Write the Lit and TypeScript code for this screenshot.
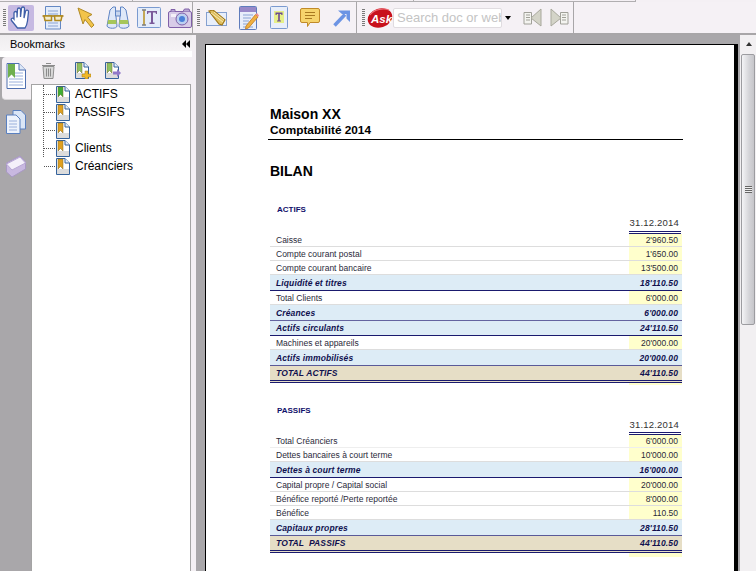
import { LitElement, html, css, svg } from "lit";
import { customElement } from "lit/decorators.js";

type Row = { label: string; value: string; kind: "plain" | "sub" | "total"; h: number; line?: string };

const ACTIFS: Row[] = [
  { label: "Caisse", value: "2'960.50", kind: "plain", h: 13 },
  { label: "Compte courant postal", value: "1'650.00", kind: "plain", h: 14 },
  { label: "Compte courant bancaire", value: "13'500.00", kind: "plain", h: 14 },
  { label: "Liquidité et titres", value: "18'110.50", kind: "sub", h: 16, line: "#1a1a6e" },
  { label: "Total Clients", value: "6'000.00", kind: "plain", h: 14 },
  { label: "Créances", value: "6'000.00", kind: "sub", h: 16, line: "#6464a0" },
  { label: "Actifs circulants", value: "24'110.50", kind: "sub", h: 15, line: "#1a1a6e" },
  { label: "Machines et appareils", value: "20'000.00", kind: "plain", h: 14 },
  { label: "Actifs immobilisés", value: "20'000.00", kind: "sub", h: 16, line: "#5a5a98" },
  { label: "TOTAL ACTIFS", value: "44'110.50", kind: "total", h: 14 },
];

const PASSIFS: Row[] = [
  { label: "Total Créanciers", value: "6'000.00", kind: "plain", h: 13, line: "#eeeeee" },
  { label: "Dettes bancaires à court terme", value: "10'000.00", kind: "plain", h: 14 },
  { label: "Dettes à court terme", value: "16'000.00", kind: "sub", h: 16, line: "#1a1a6e" },
  { label: "Capital propre / Capital social", value: "20'000.00", kind: "plain", h: 14 },
  { label: "Bénéfice reporté /Perte reportée", value: "8'000.00", kind: "plain", h: 14 },
  { label: "Bénéfice", value: "110.50", kind: "plain", h: 14 },
  { label: "Capitaux propres", value: "28'110.50", kind: "sub", h: 16, line: "#5a5a98" },
  { label: "TOTAL  PASSIFS", value: "44'110.50", kind: "total", h: 14 },
];

const BOOKMARKS: { text: string; color: string }[] = [
  { text: "ACTIFS", color: "#3fae35" },
  { text: "PASSIFS", color: "#e0a020" },
  { text: "", color: "#e0a020" },
  { text: "Clients", color: "#e0a020" },
  { text: "Créanciers", color: "#e0a020" },
];

const icon = (w: number, h: number, body: unknown) =>
  html`<svg width=${w} height=${h} viewBox="0 0 ${w} ${h}">${body}</svg>`;

// Small document with a coloured ribbon, used in the tree and the panel toolbar
const ribbonDoc = (color: string) => svg`
  <path d="M1.5 .5H10L14.5 5V16.5H1.5Z" fill="#fff" stroke="#34629c"/>
  <path d="M2 11H14V16H2Z" fill="#dcdcdc"/>
  <path d="M10 .5V5H14.5" fill="#e6eefa" stroke="#34629c"/>
  <path d="M3 1H8V11L5.5 8.5 3 11Z" fill=${color} stroke="#7a6a30" stroke-width=".5"/>`;

const handIcon = icon(26, 26, svg`
  <path d="M6 14V8a1.500 1.500 0 0 1 3 0V12.500L9.500 4.500a1.500 1.500 0 0 1 3 0V12L13.500 3.500a1.500 1.500 0 0 1 3 0L16 13 17.500 6.500a1.500 1.500 0 0 1 3 .4L19.500 16c-.4 3.500-1.200 5-2.500 7H9.500L3.500 15.500c-1.200-1.800 1.200-3.200 2.500-1.500Z" fill="#fff" stroke="#3f5fa8" stroke-width="1.300"/>`);

const glassesIcon = icon(22, 24, svg`
  <path d="M3.500 .5H18.500V23H3.500Z" fill="#e4ecfa" stroke="#6488c4"/>
  <path d="M6 5H16M6 8H16M6 17H16M6 20H16" stroke="#8aa4d4"/>
  <path d="M.5 10H21.500" stroke="#a07818" stroke-width="1.500"/>
  <path d="M2 10H9.500V14.500H3Z M12.500 10H20L19 14.500H13Z" fill="#f4ecd0" stroke="#b08a20" stroke-width="1.500"/>`);

const arrowIcon = icon(18, 22, svg`
  <path d="M1 1L15 7.500 10.500 10 17 18 14.500 20.500 8 12.500 6 17Z" fill="#f2c44a" stroke="#b08a28"/>`);

const binocularsIcon = icon(24, 24, svg`
  <path d="M4 4L7 1H9.500V6L11 20C11 23 2 23 1 20Z" fill="#dfe8f8" stroke="#5f84c4"/>
  <path d="M20 4L17 1H14.500V6L13 20C13 23 22 23 23 20Z" fill="#dfe8f8" stroke="#5f84c4"/>
  <path d="M2 14H10.500V18H1.500ZM13.500 14H22L22.500 18H13Z" fill="#a6c65a"/>
  <path d="M9.500 5H14.500V10H9.500Z" fill="#c8d6ee" stroke="#5f84c4"/>`);

const textToolIcon = icon(24, 21, svg`
  <rect x=".5" y=".5" width="23" height="20" rx="1" fill="#e4ecfa" stroke="#7a9ad0"/>
  <path d="M7 3.500V17.500" stroke="#b89020" stroke-width="1.500"/>
  <path d="M5 3H9M5 18H9" stroke="#444" />
  <path d="M10 4H20V7H19L18.500 5.500H16V15.500H17.500V17H12.500V15.500H14V5.500H11.500L11 7H10Z" fill="#7a5a9a"/>`);

const cameraIcon = icon(24, 20, svg`
  <rect x=".5" y="3.500" width="23" height="16" rx="1.500" fill="#d8cce8" stroke="#8060a8"/>
  <path d="M3 3.500V1.500H7V3.500M15 3.500L16.500 1H21L22 3.500" fill="#b8a8d4" stroke="#8060a8"/>
  <circle cx="14" cy="11" r="6" fill="#bcd0f0" stroke="#8060a8"/>
  <circle cx="14" cy="11" r="3" fill="#4a80d8"/>
  <rect x="3" y="6" width="5" height="3" fill="#f4f0f8"/>`);

const penDocIcon = icon(22, 16, svg`
  <rect x=".5" y="2.500" width="20" height="13" fill="#e8eefa" stroke="#84a0d0"/>
  <path d="M3 1L7 0 19 10 16 15 13 14Z" fill="#e0c060" stroke="#a07818" stroke-width="1.200"/>
  <path d="M5 3L17 12M8 2L18 10" stroke="#fff4c8" stroke-width=".8"/>`);

const noteIcon = icon(20, 24, svg`
  <rect x=".5" y=".5" width="17" height="23" rx="1" fill="#e8eefa" stroke="#5f7cbc"/>
  <rect x="1" y="1" width="16" height="5" fill="#9888c8"/>
  <path d="M4 9H14M4 12H12M4 15H10M4 18H9M4 21H14" stroke="#8aa4d4"/>
  <path d="M7 20L6.500 23 9.500 22 19 11 16.500 8.500Z" fill="#f0b040" stroke="#c07a20" stroke-width=".8"/>
  <path d="M16.500 8.500L19 11 20 9.500 18 7Z" fill="#f09090"/>`);

const textNoteIcon = icon(18, 23, svg`
  <rect x=".5" y=".5" width="17" height="22" rx="1" fill="#e8eefa" stroke="#7a9ad0"/>
  <rect x="4" y="5" width="10" height="12" fill="#e6f088"/>
  <path d="M5.500 6.500H12.500V9H11.500L11 8H9.800V14.500H11V15.500H7V14.500H8.200V8H7L6.500 9H5.500Z" fill="#6a4a90"/>`);

const commentIcon = icon(20, 20, svg`
  <path d="M2 .5H18A1.500 1.500 0 0 1 19.500 2V13A1.500 1.500 0 0 1 18 14.500H10L7.500 18.500V14.500H2A1.500 1.500 0 0 1 .5 13V2A1.500 1.500 0 0 1 2 .5Z" fill="#f6d46c" stroke="#c08a28"/>
  <path d="M5 4.500H15M5 7.500H15M5 10.500H12" stroke="#a87a20"/>`);

const linkArrowIcon = icon(18, 18, svg`
  <path d="M1.500 16.500L12 5.500" stroke="#6c94e4" stroke-width="3.500"/>
  <path d="M5 1.500H17V13L13.500 9.500V5H9Z" fill="#6c94e4"/>`);

// Red tilted ball with the word on top as real text
const askLogo = icon(26, 22, svg`
  <ellipse cx="13" cy="11" rx="12.500" ry="9.500" transform="rotate(-18 13 11)" fill="#c8101c"/>
  <path d="M3 8C7 2 17 1 22 3" stroke="#f07078" stroke-width="1.200" fill="none"/>
  <text x="4" y="15.500" font-family="Liberation Sans" font-size="11.500" font-weight="bold" font-style="italic" fill="#fff">Ask</text>`);

const navIcon = (flip: boolean) => icon(19, 19, svg`
  <g transform=${flip ? "translate(19 0) scale(-1 1)" : ""}>
    <path d="M1 4.500H8.500V16H1Z M3 7H7M3 9.500H7M3 12H7" fill="#f4f4f0" stroke="#a0a098"/>
    <path d="M18 1V18L8 10Z" fill="#d4d4c8" stroke="#a8a89c"/>
  </g>`);

const trashIcon = icon(15, 17, svg`
  <path d="M2 4.500H13L12 16.500H3Z" fill="#d8d8d8" stroke="#909090"/>
  <path d="M1 3.500H14M5 1.500H10M5.500 6.500V14.500M7.500 6.500V14.500M9.500 6.500V14.500" stroke="#8c8c8c"/>`);

const addBookmarkIcon = icon(17, 17, svg`
  ${ribbonDoc("#8cc060")}
  <path d="M8 12H11V9H14V12H17V15H14V17H11V15H8Z" fill="#f0b828" stroke="#a07818" stroke-width=".5"/>`);

const moveBookmarkIcon = icon(17, 17, svg`
  ${ribbonDoc("#8cc060")}
  <path d="M9 9.500H13V7L17 11 13 15V12.500H9Z" fill="#9078c8"/>`);

const docTabIcon = icon(20, 26, svg`
  <path d="M1 .5H13L19.500 7V25.500H1Z" fill="#fff" stroke="#5070b0"/>
  <path d="M13 .5V7H19.500" fill="#dde8f8" stroke="#5070b0"/>
  <path d="M9 10H17M9 13H17M3 16H17M3 19H17M3 22H17" stroke="#9ab0dc"/>
  <path d="M2 1H9V15L5.500 11.500 2 15Z" fill="#70b050"/>`);

const pagesTabIcon = icon(20, 24, svg`
  <path d="M7 .5H15L19.500 5V19H7Z" fill="#dbe6f6" stroke="#5a80c0"/>
  <path d="M.5 5H10L14 9V23.500H.5Z" fill="#eef3fc" stroke="#5a80c0"/>
  <path d="M3 11H11M3 14H11M3 17H11M3 20H11" stroke="#9ab0dc"/>`);

const layersTabIcon = icon(20, 24, svg`
  <path d="M.5 8L14 1 19.500 7V14L6 22 .5 17Z" fill="#c8b8e0" stroke="#a898c4"/>
  <path d="M.5 9L14 2 19.500 8 6 15Z" fill="#f4f0fa" stroke="#b8a8d4"/>`);

const chevronLeft = icon(8, 8, svg`<path d="M4 0V8L0 4ZM8 0V8L4 4Z" fill="#000"/>`);

@customElement("app-root")
export class AppRoot extends LitElement {
  static styles = css`
    :host {
      display: flex;
      flex-direction: column;
      width: 756px;
      height: 571px;
      overflow: hidden;
      background: #f4f0f4;
      font-family: "Liberation Sans", Arial, sans-serif;
    }

    .top-strip {
      height: 2px;
      flex: none;
      display: flex;
    }
    .top-strip div {
      box-sizing: border-box;
      border-right: 1px solid #b0aeb0;
      border-bottom: 1px solid #b0aeb0;
    }
    .seg1 { width: 133px; }
    .seg2 { width: 281px; }
    .seg3 { width: 222px; }

    .toolbar {
      height: 31px;
      flex: none;
      display: flex;
      align-items: center;
      border-bottom: 2px solid #a8a6a8;
      background: #f5f1f5;
    }
    .group {
      display: flex;
      align-items: center;
      height: 100%;
      box-sizing: border-box;
      border-right: 1px solid #a8a6a8;
    }
    .grip {
      width: 3px;
      height: 18px;
      margin-right: 2px;
      background: repeating-linear-gradient(#7a7a7a 0 1px, transparent 1px 2px);
    }
    .tool {
      display: flex;
      align-items: center;
      justify-content: center;
      flex: none;
    }
    .tool.active {
      width: 26px;
      height: 26px;
      background: #c6b9e2;
      border-radius: 2px;
    }
    .g1 { width: 193px; padding-left: 3px; }
    .g2 { width: 164px; padding-left: 4px; }
    .g3 { width: 217px; padding-left: 5px; }

    .g1 .glasses { margin-left: 8px; }
    .g1 .arrow { margin-left: 13px; }
    .g1 .binoculars { margin-left: 11px; }
    .g1 .text-tool { margin-left: 7px; }
    .g1 .camera { margin-left: 7px; }
    .g2 .pen { margin-left: 4px; }
    .g2 .note { margin-left: 11px; }
    .g2 .text-note { margin-left: 11px; }
    .g2 .comment { margin-left: 12px; }
    .g2 .link { margin-left: 13px; }
    .g3 .prev { margin-left: 12px; }
    .g3 .next { margin-left: 8px; }

    .search {
      width: 109px;
      height: 20px;
      box-sizing: border-box;
      border: 1px solid #e0dce0;
      border-radius: 2px;
      background: #fff;
      overflow: hidden;
      white-space: nowrap;
      color: #c4c4c4;
      font-size: 13px;
      line-height: 18px;
      padding-left: 3px;
    }
    .drop {
      width: 0;
      height: 0;
      margin-left: 3px;
      border-left: 3.5px solid transparent;
      border-right: 3.5px solid transparent;
      border-top: 4px solid #000;
    }

    .main {
      flex: 1;
      display: flex;
      min-height: 0;
    }

    .panel {
      width: 192px;
      flex: none;
      display: flex;
      flex-direction: column;
    }
    .panel-title {
      height: 15px;
      padding: 1px 2px 0 10px;
      display: flex;
      justify-content: space-between;
      align-items: center;
      font-size: 11px;
      color: #000;
      background: linear-gradient(#efedef, #f6f4f6);
    }
    .panel-gap {
      height: 6px;
      background: #fff;
    }
    .panel-body {
      flex: 1;
      display: flex;
      min-height: 0;
    }
    .tabs {
      width: 32px;
      flex: none;
      background: #a9a7aa;
      display: flex;
      flex-direction: column;
      align-items: flex-start;
      gap: 21px;
    }
    .tab {
      width: 30px;
      height: 44px;
      margin-left: 2px;
      display: flex;
      align-items: center;
      padding-left: 4px;
      box-sizing: border-box;
    }
    .tab.on {
      background: #f4f0f4;
      border-radius: 4px 0 0 4px;
      border-bottom: 1px solid #d8d6d8;
      height: 43px;
      padding-bottom: 4px;
    }
    .tab.second { margin-top: -11px; height: 24px; }
    .tab.third { margin-top: 0; height: 24px; }
    .panel-right {
      flex: 1;
      display: flex;
      flex-direction: column;
      min-width: 0;
      background: #f4f0f4;
    }
    .panel-tools {
      height: 27px;
      flex: none;
      display: flex;
      align-items: center;
      padding-left: 9px;
      box-sizing: border-box;
    }
    .panel-tools .add { margin-left: 18px; }
    .panel-tools .move { margin-left: 13px; }
    .tree {
      flex: 1;
      margin: 0 1px 0 -1px;
      border: 1px solid #a4a4a4;
      border-bottom: none;
      background: #fff;
      padding-left: 11px;
    }
    .tree-list {
      border-left: 1px dotted #555;
      height: 72px;
      margin-top: 9px;
    }
    .tree-inner { margin-top: -9px; }
    .node {
      display: flex;
      align-items: center;
      height: 18px;
      font-size: 12px;
      color: #000;
      white-space: nowrap;
    }
    .tick {
      width: 11px;
      border-bottom: 1px dotted #555;
      flex: none;
    }
    .node svg { flex: none; }
    .node span { margin-left: 5px; }

    .splitter {
      width: 4px;
      flex: none;
      background: #f4f0f4;
    }

    .doc {
      flex: 1;
      min-width: 0;
      background: #a9a7aa;
      padding: 9px 2px 0 9px;
      overflow: hidden;
    }
    .page {
      height: 700px;
      background: #fff;
      border-top: 1px solid #000;
      border-left: 1px solid #000;
      border-right: 4px solid #000;
      box-sizing: border-box;
      padding: 62px 0 0 64px;
      color: #000;
    }
    .h1 { font-size: 14px; font-weight: bold; line-height: 15px; }
    .h2 {
      font-size: 11.8px;
      font-weight: bold;
      line-height: 14px;
      margin-top: 1px;
      padding-bottom: 1px;
    }
    .rule {
      width: 415px;
      margin-left: -2px;
      height: 1px;
      background: #000;
      margin-top: 1px;
    }
    .bilan {
      font-size: 14px;
      font-weight: bold;
      line-height: 16px;
      margin-top: 23px;
    }
    .section {
      font-size: 8px;
      font-weight: bold;
      color: #10106a;
      line-height: 10px;
      padding-left: 7px;
    }
    .section.first { margin-top: 26px; }
    .section.next { margin-top: 21px; }
    .date {
      width: 412px;
      box-sizing: border-box;
      text-align: right;
      font-size: 9.5px;
      letter-spacing: 0.2px;
      color: #333;
      line-height: 12px;
      padding-right: 3px;
      margin-top: 2px;
    }
    .date.second { margin-top: 3px; }
    .table { width: 412px; }
    .head-line {
      display: grid;
      grid-template-columns: 359px 53px;
      height: 3px;
      margin-top: 2px;
    }
    .head-line.second { margin-top: 1px; }
    .head-line i {
      grid-column: 2;
      border-top: 3px double #1a1a6e;
      margin-right: 1px;
    }
    .row {
      display: grid;
      grid-template-columns: 359px 53px;
      box-sizing: border-box;
      font-size: 8.5px;
      color: #2a2a3a;
      border-bottom: 1px solid #dddddd;
    }
    .row .l {
      padding-left: 6px;
      display: flex;
      align-items: center;
      white-space: pre;
    }
    .row .v {
      background: #ffffcc;
      display: flex;
      align-items: center;
      justify-content: flex-end;
      padding-right: 4px;
    }
    .row.sub,
    .row.total {
      font-weight: bold;
      font-style: italic;
      color: #10104e;
      letter-spacing: 0.12px;
    }
    .row.sub { background: #ddecf6; }
    .row.sub .v { background: #ddecf6; }
    .row.total {
      background: #e6dec6;
      border-bottom: 3px double #1a1a6e;
    }
    .row.total .v { background: #e6dec6; }
    .stub {
      width: 53px;
      margin-left: 359px;
      background: #ffffcc;
    }
    .stub.short { height: 2px; }
    .stub.long { height: 4px; }

    .scrollbar {
      width: 16px;
      flex: none;
      display: flex;
      flex-direction: column;
      background: #f2f0f2;
      box-sizing: border-box;
      padding-left: 1px;
    }
    .up {
      height: 17px;
      display: flex;
      align-items: center;
      justify-content: center;
    }
    .up b {
      width: 0;
      height: 0;
      border-left: 3.5px solid transparent;
      border-right: 3.5px solid transparent;
      border-bottom: 4px solid #333;
    }
    .thumb {
      height: 269px;
      margin: 2px 1px 0 0;
      border: 1px solid #9c9ca0;
      border-radius: 2px;
      background: linear-gradient(90deg, #f4f4f6, #d4d4d8 60%, #c6c6ca);
      display: flex;
      align-items: center;
      justify-content: center;
    }
    .thumb b {
      width: 7px;
      height: 7px;
      background: repeating-linear-gradient(#666 0 1px, #eee 1px 2px);
    }
  `;

  private renderRows(rows: Row[]) {
    return rows.map(
      (r) => html`
        <div
          class="row ${r.kind}"
          style="height:${r.h + (r.kind === "total" ? 3 : 0)}px;${r.line ? `border-bottom-color:${r.line}` : ""}"
        >
          <div class="l">${r.label}</div>
          <div class="v">${r.value}</div>
        </div>
      `,
    );
  }

  render() {
    return html`
      <div class="top-strip">
        <div class="seg1"></div>
        <div class="seg2"></div>
        <div class="seg3"></div>
      </div>
      <div class="toolbar">
        <div class="group g1">
          <div class="grip"></div>
          <div class="tool active">${handIcon}</div>
          <div class="tool glasses">${glassesIcon}</div>
          <div class="tool arrow">${arrowIcon}</div>
          <div class="tool binoculars">${binocularsIcon}</div>
          <div class="tool text-tool">${textToolIcon}</div>
          <div class="tool camera">${cameraIcon}</div>
        </div>
        <div class="group g2">
          <div class="grip"></div>
          <div class="tool pen">${penDocIcon}</div>
          <div class="tool note">${noteIcon}</div>
          <div class="tool text-note">${textNoteIcon}</div>
          <div class="tool comment">${commentIcon}</div>
          <div class="tool link">${linkArrowIcon}</div>
        </div>
        <div class="group g3">
          <div class="grip"></div>
          <div class="tool">${askLogo}</div>
          <div class="search">Search doc or web</div>
          <div class="drop"></div>
          <div class="tool prev">${navIcon(false)}</div>
          <div class="tool next">${navIcon(true)}</div>
        </div>
      </div>
      <div class="main">
        <div class="panel">
          <div class="panel-title"><span>Bookmarks</span>${chevronLeft}</div>
          <div class="panel-gap"></div>
          <div class="panel-body">
            <div class="tabs">
              <div class="tab on">${docTabIcon}</div>
              <div class="tab second">${pagesTabIcon}</div>
              <div class="tab third">${layersTabIcon}</div>
            </div>
            <div class="panel-right">
              <div class="panel-tools">
                <div class="tool">${trashIcon}</div>
                <div class="tool add">${addBookmarkIcon}</div>
                <div class="tool move">${moveBookmarkIcon}</div>
              </div>
              <div class="tree">
                <div class="tree-list">
                  <div class="tree-inner">
                    ${BOOKMARKS.map(
                      (b) => html`
                        <div class="node">
                          <div class="tick"></div>
                          ${icon(15, 17, ribbonDoc(b.color))}
                          <span>${b.text}</span>
                        </div>
                      `,
                    )}
                  </div>
                </div>
              </div>
            </div>
          </div>
        </div>
        <div class="splitter"></div>
        <div class="doc">
          <div class="page">
            <div class="h1">Maison XX</div>
            <div class="h2">Comptabilité 2014</div>
            <div class="rule"></div>
            <div class="bilan">BILAN</div>
            <div class="section first">ACTIFS</div>
            <div class="date">31.12.2014</div>
            <div class="table">
              <div class="head-line"><i></i></div>
              ${this.renderRows(ACTIFS)}
              <div class="stub short"></div>
            </div>
            <div class="section next">PASSIFS</div>
            <div class="date second">31.12.2014</div>
            <div class="table">
              <div class="head-line second"><i></i></div>
              ${this.renderRows(PASSIFS)}
              <div class="stub long"></div>
            </div>
          </div>
        </div>
        <div class="scrollbar">
          <div class="up"><b></b></div>
          <div class="thumb"><b></b></div>
        </div>
      </div>
    `;
  }
}
